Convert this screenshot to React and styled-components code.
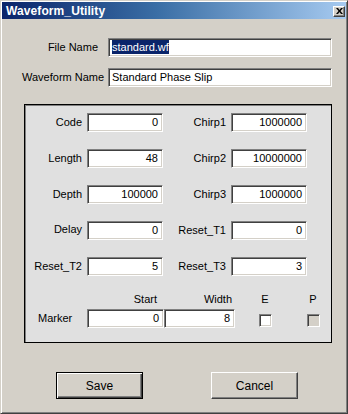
import React from "react";
import styled, { createGlobalStyle } from "styled-components";

const GlobalStyle = createGlobalStyle`
  html, body {
    margin: 0;
    padding: 0;
    background: #d4d0c8;
  }
  body {
    font-family: "Liberation Sans", Arial, sans-serif;
    font-size: 11px;
    color: #000;
  }
`;

const Window = styled.div`
  box-sizing: border-box;
  width: 348px;
  height: 414px;
  background: #d4d0c8;
  border-style: solid;
  border-width: 1px;
  border-color: #d4d0c8 #404040 #404040 #d4d0c8;
  box-shadow: inset 1px 1px #fff, inset -1px -1px #808080;
  padding: 1px;
  display: flex;
  flex-direction: column;
`;

const TitleBar = styled.div`
  height: 17px;
  display: flex;
  align-items: center;
  justify-content: space-between;
  padding: 0 1px 0 4px;
  background: linear-gradient(90deg, #0a246a 0%, #3a6ea5 45%, #a6caf0 100%);
`;

const Title = styled.span`
  color: #fff;
  font-weight: bold;
  font-size: 12px;
  letter-spacing: 0.1px;
`;

const CloseButton = styled.div`
  box-sizing: border-box;
  width: 12px;
  height: 11px;
  margin-top: 1px;
  background: #d4d0c8;
  border-style: solid;
  border-width: 1px;
  border-color: #fff #404040 #404040 #fff;
  box-shadow: inset -1px -1px #808080;
  display: flex;
  align-items: center;
  justify-content: center;
`;

const Body = styled.div`
  display: flex;
  flex-direction: column;
  padding: 19px 13px 0 20px;
`;

const TopRow = styled.div`
  display: grid;
  grid-template-columns: 76px 224px;
  column-gap: 10px;
  align-items: center;
  margin-bottom: 11px;
`;

const Label = styled.span`
  text-align: ${(p) => p.$align || "right"};
  white-space: nowrap;
  line-height: 13px;
`;

const Field = styled.div`
  box-sizing: border-box;
  height: 19px;
  background: #fff;
  border-style: solid;
  border-width: 1px;
  border-color: #808080 #fff #fff #808080;
  box-shadow: inset 1px 1px #404040, inset -1px -1px #d4d0c8;
  padding: 0 4px 0 3px;
  line-height: 17px;
  text-align: ${(p) => p.$align || "left"};
  white-space: nowrap;
  overflow: hidden;
`;

const Selected = styled.span`
  background: #0a246a;
  color: #fff;
  padding: 1px 0;
`;

const Panel = styled.div`
  box-sizing: border-box;
  width: 308px;
  margin: 6px 0 0 2px;
  height: 239px;
  background: #e0e0e0;
  border: 1px solid #000;
  box-shadow: inset 1px 1px #808080;
  padding: 8px 0 0 5px;
  display: flex;
  flex-direction: column;
`;

const ParamGrid = styled.div`
  display: grid;
  grid-template-columns: 52px 76px 58px 76px;
  grid-auto-rows: 19px;
  column-gap: 5px;
  row-gap: 17px;
  align-items: center;
`;

const ParamLabel = styled(Label)`
  align-self: ${(p) => (p.$raised ? "start" : "center")};
  margin-top: ${(p) => (p.$raised ? "2px" : "0")};
`;

const MarkerGrid = styled.div`
  display: grid;
  grid-template-columns: 57px 77px 71px 60px 36px;
  grid-template-rows: 13px 19px;
  row-gap: 3px;
  margin-top: 17px;
  align-items: center;
`;

const HeadLabel = styled.span`
  line-height: 13px;
  text-align: ${(p) => p.$align || "right"};
  padding-right: ${(p) => p.$pr || 0}px;
`;

const MarkerLabel = styled.span`
  padding-left: 8px;
  line-height: 13px;
`;

const Check = styled.div`
  box-sizing: border-box;
  width: 13px;
  height: 13px;
  justify-self: center;
  margin-top: 4px;
  background: ${(p) => (p.$disabled ? "#d4d0c8" : "#fff")};
  border-style: solid;
  border-width: 1px;
  border-color: #808080 #fff #fff #808080;
  box-shadow: inset 1px 1px #404040, inset -1px -1px #d4d0c8;
`;

const ButtonRow = styled.div`
  display: flex;
  gap: 68px;
  margin: 29px 0 0 34px;
`;

const Button = styled.div`
  box-sizing: border-box;
  width: 87px;
  height: 27px;
  background: #d4d0c8;
  display: flex;
  align-items: center;
  justify-content: center;
  font-size: 12px;
  border-style: solid;
  border-width: 1px;
  border-color: ${(p) => (p.$default ? "#000" : "#fff #404040 #404040 #fff")};
  box-shadow: ${(p) =>
    p.$default
      ? "inset 1px 1px #fff, inset -1px -1px #404040, inset -2px -2px #808080"
      : "inset -1px -1px #808080"};
`;

const params = [
  ["Code", "0", "Chirp1", "1000000"],
  ["Length", "48", "Chirp2", "10000000"],
  ["Depth", "100000", "Chirp3", "1000000"],
  ["Delay", "0", "Reset_T1", "0"],
  ["Reset_T2", "5", "Reset_T3", "3"],
];

export default function App() {
  return (
    <>
      <GlobalStyle />
      <Window>
        <TitleBar>
          <Title>Waveform_Utility</Title>
          <CloseButton>
            <svg width="7" height="6" viewBox="0 0 7 6">
              <path d="M0 0L2 0L3.5 2L5 0L7 0L4.5 3L7 6L5 6L3.5 4L2 6L0 6L2.5 3Z" fill="#000" />
            </svg>
          </CloseButton>
        </TitleBar>
        <Body>
          <TopRow>
            <Label>File Name</Label>
            <Field>
              <Selected>standard.wf</Selected>
            </Field>
          </TopRow>
          <TopRow>
            <Label>Waveform Name</Label>
            <Field>Standard Phase Slip</Field>
          </TopRow>
          <Panel>
            <ParamGrid>
              {params.map(([l1, v1, l2, v2]) => (
                <React.Fragment key={l1}>
                  <ParamLabel $raised={l1 === "Delay"}>{l1}</ParamLabel>
                  <Field $align="right">{v1}</Field>
                  <ParamLabel>{l2}</ParamLabel>
                  <Field $align="right">{v2}</Field>
                </React.Fragment>
              ))}
            </ParamGrid>
            <MarkerGrid>
              <span />
              <HeadLabel $pr={7}>Start</HeadLabel>
              <HeadLabel $pr={3}>Width</HeadLabel>
              <HeadLabel $align="center">E</HeadLabel>
              <HeadLabel $align="center">P</HeadLabel>
              <MarkerLabel>Marker</MarkerLabel>
              <Field $align="right">0</Field>
              <Field $align="right">8</Field>
              <Check />
              <Check $disabled />
            </MarkerGrid>
          </Panel>
          <ButtonRow>
            <Button $default>Save</Button>
            <Button>Cancel</Button>
          </ButtonRow>
        </Body>
      </Window>
    </>
  );
}
